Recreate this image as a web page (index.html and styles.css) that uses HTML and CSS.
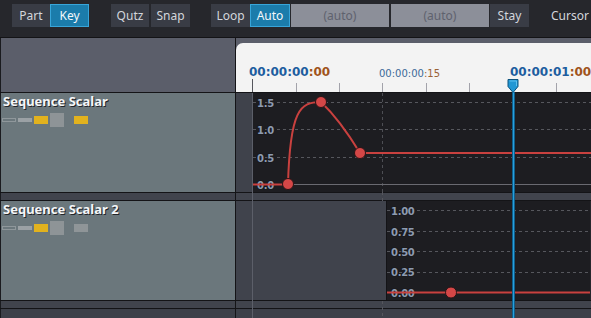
FILE: index.html
```html
<!DOCTYPE html>
<html lang="en">
<head>
  <meta charset="UTF-8">
  <title>Sequencer</title>
  <link rel="stylesheet" href="styles.css">
</head>
<body>
  <div class="toolbar">
    <div class="group">
      <span class="btn w38">Part</span>
      <span class="btn w39 on">Key</span>
    </div>
    <div class="group snap-group">
      <span class="btn w38">Qutz</span>
      <span class="btn w39">Snap</span>
    </div>
    <div class="group loop-group">
      <span class="btn w39">Loop</span>
      <span class="btn w40 on">Auto</span>
      <span class="btn field">(auto)</span>
      <span class="btn field field-2">(auto)</span>
      <span class="btn w39 stay">Stay</span>
    </div>
    <span class="tool-label">Cursor</span>
  </div>

  <div class="main">
    <div class="head-row">
      <div class="corner"></div>
      <div class="ruler-wrap">
        <div class="ruler">
          <svg width="355" height="49" viewBox="236 43 355 49">
            <line class="tick major" x1="252.5" y1="79" x2="252.5" y2="92"/>
            <line class="tick" x1="296.5" y1="83" x2="296.5" y2="92"/>
            <line class="tick" x1="339.5" y1="83" x2="339.5" y2="92"/>
            <line class="tick" x1="382.5" y1="83" x2="382.5" y2="92"/>
            <line class="tick" x1="426.5" y1="83" x2="426.5" y2="92"/>
            <line class="tick" x1="469.5" y1="83" x2="469.5" y2="92"/>
            <line class="tick" x1="556.5" y1="83" x2="556.5" y2="92"/>
            <text class="tc big" x="249" y="75.5">00:00:00<tspan class="fr">:00</tspan></text>
            <text class="tc small" x="379" y="76.5">00:00:00<tspan class="fr">:15</tspan></text>
            <text class="tc big" x="510" y="75.5">00:00:01<tspan class="fr">:00</tspan></text>
          </svg>
        </div>
      </div>
    </div>

    <!-- piste -->
    <div class="track">
      <div class="track-head">
        <div class="track-name">Sequence Scalar</div>
        <div class="track-icons">
          <i class="ic ic-out"></i>
          <i class="ic ic-bar"></i>
          <i class="ic ic-key"></i>
          <i class="ic ic-sq"></i>
          <i class="ic ic-key ic-last"></i>
        </div>
      </div>
      <div class="lane">
        <div class="gutter gutter-1"></div>
        <svg class="graph" width="339" height="99" viewBox="252 93 339 99">
          <line class="grid" x1="253" y1="102.5" x2="591" y2="102.5"/>
          <line class="grid" x1="253" y1="129.5" x2="591" y2="129.5"/>
          <line class="grid" x1="253" y1="157.5" x2="591" y2="157.5"/>
          <line class="grid-dash-v" x1="382.5" y1="93" x2="382.5" y2="192"/>
          <line class="zero" x1="253" y1="184.5" x2="591" y2="184.5"/>
          <text class="ax" x="257" y="106.5">1.5</text>
          <text class="ax" x="257" y="133.5">1.0</text>
          <text class="ax" x="257" y="161.5">0.5</text>
          <text class="ax" x="257" y="188.5">0.0</text>
          <path class="curve" d="M252,184.5 H288 C290,110 300,102 321,102 Q340,120 360,153 H591"/>
          <circle class="key" cx="288" cy="184" r="5.5"/>
          <circle class="key" cx="321" cy="102" r="5.5"/>
          <circle class="key" cx="360" cy="153" r="5.5"/>
        </svg>
      </div>
    </div>
    <div class="strip">
      <div class="strip-head"></div>
    </div>

    <div class="track">
      <div class="track-head">
        <div class="track-name">Sequence Scalar 2</div>
        <div class="track-icons">
          <i class="ic ic-out"></i>
          <i class="ic ic-bar"></i>
          <i class="ic ic-key"></i>
          <i class="ic ic-sq"></i>
          <i class="ic ic-off ic-last"></i>
        </div>
      </div>
      <div class="lane">
        <div class="gutter gutter-2"></div>
        <svg class="graph graph-2" width="203" height="99" viewBox="388 201 203 99">
          <line class="grid" x1="388" y1="210.5" x2="591" y2="210.5"/>
          <line class="grid" x1="388" y1="231.5" x2="591" y2="231.5"/>
          <line class="grid" x1="388" y1="251.5" x2="591" y2="251.5"/>
          <line class="grid" x1="388" y1="272.5" x2="591" y2="272.5"/>
          <text class="ax" x="392" y="214.5">1.00</text>
          <text class="ax" x="392" y="235.5">0.75</text>
          <text class="ax" x="392" y="255.5">0.50</text>
          <text class="ax" x="392" y="276">0.25</text>
          <text class="ax" x="392" y="296.5">0.00</text>
          <path class="curve" d="M388,292.5 H591"/>
          <circle class="key" cx="452" cy="292.5" r="5.5"/>
        </svg>
      </div>
    </div>
    <div class="strip">
      <div class="strip-head"></div>
    </div>
    <div class="rest">
      <div class="strip-head"></div>
    </div>

    <!-- lignes par-dessus -->
    <div class="frame-line"></div>
    <div class="mid-dash mid-dash-1"></div>
    <div class="mid-dash mid-dash-2"></div>
    <div class="playhead-line"></div>
    <svg class="playhead-mark" width="12" height="14" viewBox="0 0 12 14">
      <path d="M1,0.5 H11 V7.5 L6,13.5 L1,7.5 Z" fill="#2197d4" stroke="#0d527c" stroke-width="1"/>
      <path d="M2.5,2 H9.5 V7" fill="none" stroke="#5cc0f0" stroke-width="1"/>
    </svg>
  </div>
</body>
</html>
```

FILE: styles.css
```css
* {
  box-sizing: border-box;
}

body {
  margin: 0;
  width: 591px;
  height: 318px;
  overflow: hidden;
  background: #26272c;
  font-family: "Noto Sans", sans-serif;
}

/* barre d'outils */
.toolbar {
  height: 38px;
  display: flex;
  align-items: flex-start;
  padding: 4px 0 0 12px;
  background: #26272c;
  border-bottom: 1px solid #131316;
}

.group {
  display: flex;
}

.snap-group {
  margin-left: 22px;
  gap: 2px;
}

.loop-group {
  margin-left: 21px;
}

.btn {
  height: 23px;
  display: flex;
  align-items: center;
  justify-content: center;
  background: #393c45;
  color: #d3d6dc;
  font-size: 12px;
}

.w38 { width: 38px; }
.w39 { width: 39px; }
.w40 { width: 40px; }

.btn.on {
  background: #1b7cab;
  border: 1px solid #38a5d9;
  color: #f3f7fa;
}

.field {
  width: 98px;
  margin-left: 1px;
  background: #8c8f99;
  color: #5f626e;
}

.field-2 {
  margin-left: 2px;
}

.stay {
  margin-left: 1px;
}

.tool-label {
  margin-left: 22px;
  height: 23px;
  line-height: 23px;
  color: #d3d6dc;
  font-size: 12px;
}

/* zone principale */
.main {
  position: relative;
  height: 280px;
}

.head-row {
  display: flex;
  height: 55px;
  border-bottom: 1px solid #141417;
}

.corner {
  width: 236px;
  background: #5b5e6a;
  border-left: 1px solid #1a1b1f;
  border-right: 1px solid #141417;
}

.ruler-wrap {
  flex: 1;
  padding-top: 5px;
  background: #5b5e6a;
}

.ruler {
  height: 49px;
  background: #f3f3f3;
  border-top-left-radius: 7px;
  overflow: hidden;
}

.ruler svg {
  display: block;
}

.tick {
  stroke: #a2a2aa;
  stroke-width: 1;
}

.tick.major {
  stroke: #55565c;
}

.tc {
  font-family: "DejaVu Sans", sans-serif;
  fill: #1d5d9f;
}

.tc.big {
  font-size: 12px;
  font-weight: bold;
}

.tc.small {
  font-size: 10px;
  fill: #3c6a98;
}

.tc .fr {
  fill: #a0531c;
}

.tc.small .fr {
  fill: #9a6236;
}

/* pistes */
.track {
  display: flex;
  height: 100px;
  border-bottom: 1px solid #141417;
}

.track-head {
  width: 236px;
  padding: 1px 0 0 1px;
  background: #6b777c;
  border-left: 1px solid #1a1b1f;
  border-right: 1px solid #141417;
}

.track-name {
  margin-left: 1px;
  font-size: 13px;
  font-weight: bold;
  line-height: 15px;
  color: #f4f6f8;
  text-shadow: 1px 1px 0 #22252a;
  white-space: nowrap;
}

.track-icons {
  display: flex;
  align-items: center;
  gap: 2px;
  height: 14px;
  margin-top: 4px;
}

.ic {
  display: block;
  width: 14px;
}

.ic-out {
  height: 4px;
  border: 1px solid #8f979b;
}

.ic-bar {
  height: 4px;
  background: #9ba1a5;
}

.ic-key {
  height: 8px;
  background: #e2b21e;
}

.ic-off {
  height: 8px;
  background: #8f9598;
}

.ic-sq {
  height: 14px;
  background: #8e9497;
}

.ic-last {
  margin-left: 8px;
}

.lane {
  flex: 1;
  display: flex;
}

.gutter {
  background: #3f424b;
}

.gutter-1 {
  width: 16px;
}

.gutter-2 {
  width: 151px;
  background: #40434c;
  border-right: 1px solid #141417;
}

.graph {
  display: block;
  background: #1d1d21;
}

.grid {
  stroke: #56575d;
  stroke-width: 1;
  stroke-dasharray: 3 3;
}

.grid-dash-v {
  stroke: #4d4e54;
  stroke-width: 1;
  stroke-dasharray: 3 3;
}

.zero {
  stroke: #6a6a71;
  stroke-width: 1;
}

.ax {
  font-family: "DejaVu Sans", sans-serif;
  font-size: 10px;
  font-weight: bold;
  fill: #8d9bb0;
  stroke: #1a1a1e;
  stroke-width: 2px;
  paint-order: stroke;
  letter-spacing: -0.3px;
}

.curve {
  fill: none;
  stroke: #c9413f;
  stroke-width: 2;
}

.key {
  fill: #d44747;
  stroke: #2a1416;
  stroke-width: 1;
}

.strip {
  display: flex;
  height: 8px;
  background: #41444d;
  border-bottom: 1px solid #141417;
}

.strip-head {
  width: 236px;
  border-left: 1px solid #1a1b1f;
  border-right: 1px solid #141417;
}

.rest {
  display: flex;
  height: 10px;
  background: #3d4049;
}

/* lignes au-dessus des pistes */
.frame-line {
  position: absolute;
  left: 252px;
  top: 55px;
  bottom: 0;
  width: 1px;
  background: #5c5f69;
}

.mid-dash {
  position: absolute;
  left: 382px;
  width: 1px;
  background: repeating-linear-gradient(to bottom, #55565d 0 3px, transparent 3px 6px);
}

.mid-dash-1 {
  top: 154px;
  height: 9px;
}

.mid-dash-2 {
  top: 263px;
  bottom: 0;
}

.playhead-line {
  position: absolute;
  left: 512px;
  top: 54px;
  bottom: 0;
  width: 3px;
  background: #28a0dc;
  border-left: 1px solid #0f5e8b;
  border-right: 1px solid #0f5e8b;
}

.playhead-mark {
  position: absolute;
  left: 507px;
  top: 41px;
}
```
